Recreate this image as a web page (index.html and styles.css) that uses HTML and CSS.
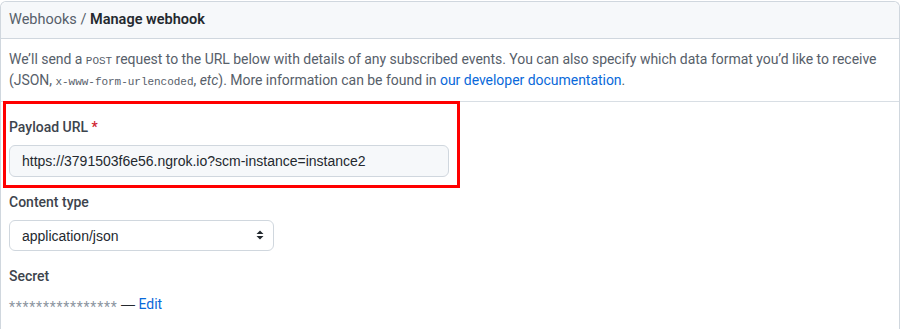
FILE: index.html
```html
<!DOCTYPE html>
<html lang="en">
<head>
  <meta charset="UTF-8" />
  <title>Manage webhook</title>
  <link rel="stylesheet" href="styles.css">
</head>
<body>
  <div class="box">
    <div class="box-header">
      <span class="crumb">Webhooks</span> <span class="sep">/</span> <strong>Manage webhook</strong>
    </div>

    <div class="box-row intro">
      We’ll send a <code>POST</code> request to the URL below with details of any subscribed events. You can also specify which data format you’d like to receive
      (JSON, <code>x-www-form-urlencoded</code>, <em>etc</em>). More information can be found in <a href="#">our developer documentation</a>.
    </div>

    <div class="box-row form">
      <div class="highlight"></div>

      <div class="group">
        <label for="url">Payload URL <span class="req">*</span></label>
        <input id="url" class="field url" type="text" value="https://3791503f6e56.ngrok.io?scm-instance=instance2">
      </div>

      <div class="group">
        <label for="ctype">Content type</label>
        <div class="select-wrap">
          <select id="ctype" class="field select">
            <option>application/json</option>
            <option>application/x-www-form-urlencoded</option>
          </select>
          <svg class="caret" width="8" height="10" viewBox="0 0 8 10">
            <path d="M4 0.5 L7.5 4 L0.5 4 Z M0.5 6 L7.5 6 L4 9.5 Z" fill="#24292f"/>
          </svg>
        </div>
      </div>

      <div class="group">
        <label>Secret</label>
        <div class="secret"><span class="stars">****************</span> <span class="dash">—</span> <a href="#">Edit</a></div>
      </div>
    </div>
  </div>
</body>
</html>
```
FILE: styles.css
```css
body {
  margin: 0;
  font-family: Roboto, 'Liberation Sans', sans-serif;
  font-size: 14px;
  line-height: 21px;
  color: #24292f;
  background-color: #fff;
}
a {
  color: #0969da;
  text-decoration: none;
}
code {
  font-family: 'Liberation Mono', monospace;
  font-size: 11px;
  line-height: 1;
}
.box {
  margin: 1px 1px 0 0;
  border: 1px solid #d0d7de;
  border-bottom-color: #d8dee4;
  border-radius: 6px 6px 0 0;
}
.box-header {
  padding: 6px 8px;
  font-size: 14.5px;
  line-height: 24px;
  background-color: #f6f8fa;
  border-bottom: 1px solid #d0d7de;
  border-radius: 6px 6px 0 0;
  color: #57606a;
}
.box-header strong {
  color: #24292f;
  font-weight: 600;
}
.box-row {
  padding: 10px 8px;
}
.intro {
  color: #57606a;
  letter-spacing: -0.03px;
  border-bottom: 1px solid #d8dee4;
}
.form {
  position: relative;
  padding: 15px 8px 13px;
}
.highlight {
  position: absolute;
  left: 2px;
  top: -1px;
  width: 451px;
  height: 81px;
  border: 3px solid #ff0000;
}
.group + .group {
  margin-top: 15px;
}
label {
  display: block;
  font-weight: 500;
  color: #3d444d;
  margin-bottom: 7px;
}
.req {
  color: #cf222e;
}
.field {
  box-sizing: border-box;
  font-family: 'Liberation Sans', Arial, sans-serif;
  font-size: 14px;
  color: #24292f;
  border: 1px solid #d0d7de;
  border-radius: 6px;
  outline: none;
}
.url {
  display: block;
  width: 440px;
  height: 32px;
  padding: 0 12px;
  background-color: #f6f8fa;
}
.select-wrap {
  position: relative;
  width: 265px;
}
.select {
  display: block;
  width: 265px;
  height: 31px;
  padding: 0 12px;
  background-color: #fff;
  appearance: none;
  -webkit-appearance: none;
}
.caret {
  position: absolute;
  right: 10px;
  top: 10px;
}
.secret {
  color: #24292f;
}
.stars {
  color: #8c959f;
  letter-spacing: 0.75px;
  vertical-align: -3px;
}
.dash {
  font-family: 'Liberation Sans', Arial, sans-serif;
}
```
